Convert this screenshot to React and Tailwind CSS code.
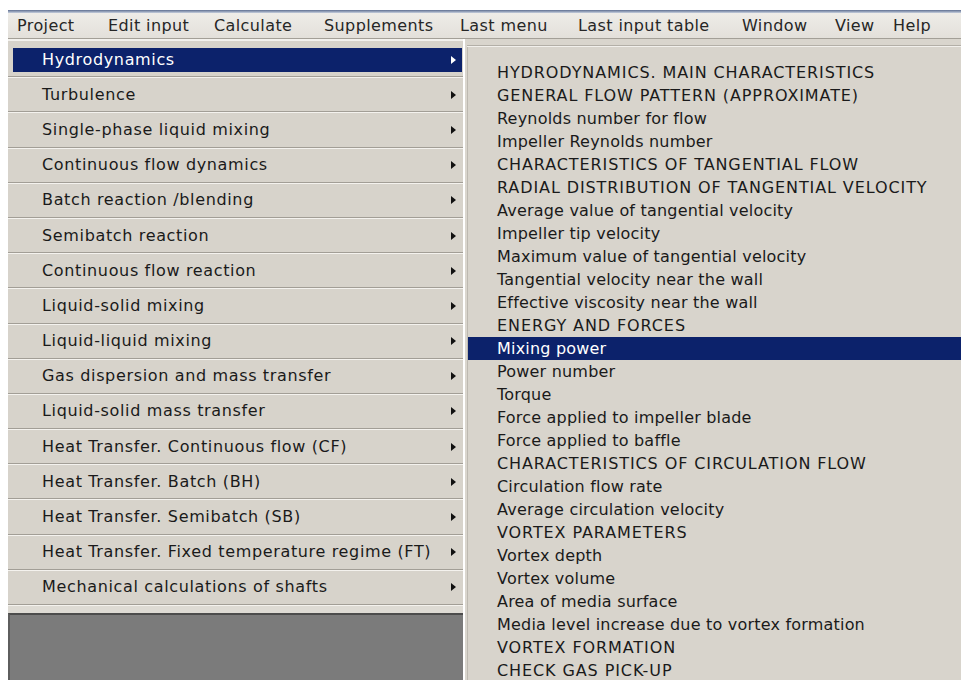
import React from "react";

const menuBar = [
  { label: "Project", w: "w-[91px]" },
  { label: "Edit input", w: "w-[106px]" },
  { label: "Calculate", w: "w-[110px]" },
  { label: "Supplements", w: "w-[136px]" },
  { label: "Last menu", w: "w-[118px]" },
  { label: "Last input table", w: "w-[164px]" },
  { label: "Window", w: "w-[93px]" },
  { label: "View", w: "w-[58px]" },
  { label: "Help", w: "w-[60px]" },
];

const sections = [
  "Hydrodynamics",
  "Turbulence",
  "Single-phase liquid mixing",
  "Continuous flow dynamics",
  "Batch reaction /blending",
  "Semibatch reaction",
  "Continuous flow reaction",
  "Liquid-solid mixing",
  "Liquid-liquid mixing",
  "Gas dispersion and mass transfer",
  "Liquid-solid mass transfer",
  "Heat Transfer. Continuous flow (CF)",
  "Heat Transfer. Batch (BH)",
  "Heat Transfer. Semibatch (SB)",
  "Heat Transfer. Fixed temperature regime (FT)",
  "Mechanical calculations of shafts",
];

// caps: section headings inside the submenu
const subItems = [
  { t: "HYDRODYNAMICS. MAIN CHARACTERISTICS", caps: true },
  { t: "GENERAL FLOW PATTERN (APPROXIMATE)", caps: true },
  { t: "Reynolds number for flow" },
  { t: "Impeller Reynolds number" },
  { t: "CHARACTERISTICS OF TANGENTIAL FLOW", caps: true },
  { t: "RADIAL DISTRIBUTION OF TANGENTIAL VELOCITY", caps: true },
  { t: "Average value of tangential velocity" },
  { t: "Impeller tip velocity" },
  { t: "Maximum value of tangential velocity" },
  { t: "Tangential velocity near the wall" },
  { t: "Effective viscosity near the wall" },
  { t: "ENERGY AND FORCES", caps: true },
  { t: "Mixing power", active: true },
  { t: "Power number" },
  { t: "Torque" },
  { t: "Force applied to impeller blade" },
  { t: "Force applied to baffle" },
  { t: "CHARACTERISTICS OF CIRCULATION FLOW", caps: true },
  { t: "Circulation flow rate" },
  { t: "Average circulation velocity" },
  { t: "VORTEX PARAMETERS", caps: true },
  { t: "Vortex depth" },
  { t: "Vortex volume" },
  { t: "Area of media surface" },
  { t: "Media level increase due to vortex formation" },
  { t: "VORTEX FORMATION", caps: true },
  { t: "CHECK GAS PICK-UP", caps: true },
];

function Arrow({ light }) {
  return (
    <svg width="5" height="8" viewBox="0 0 5 8" className="shrink-0">
      <polygon points="0,0 5,4 0,8" fill={light ? "#ffffff" : "#111111"} />
    </svg>
  );
}

function SectionRow({ label, active }) {
  return (
    <div className="h-[35.2px] flex flex-col shrink-0">
      <div className="flex-1 flex items-center pl-[5px] pr-[1px]">
        <div
          className={
            "h-[24px] w-full flex items-center justify-between pl-[29px] pr-[6px] " +
            (active ? "bg-[#0c226b] text-white" : "text-[#1a1a1a]")
          }
        >
          <span>{label}</span>
          <Arrow light={active} />
        </div>
      </div>
      <div className="h-px bg-[#a29e96]" />
      <div className="h-px bg-[#f4f2ee]" />
    </div>
  );
}

export default function App() {
  return (
    <div className="w-[961px] h-[680px] overflow-hidden bg-white font-['DejaVu_Sans',sans-serif] text-[16px] leading-none">
      <div className="h-[10px]" />
      <div className="ml-[8px] h-[670px] flex flex-col">
        {/* window menu bar */}
        <div className="h-[3px] bg-gradient-to-b from-[#5f6f91] to-[#c7cfdd]" />
        <div className="h-[25px] flex items-center pl-[9px] bg-gradient-to-b from-[#eeece8] to-[#e3e0da] text-[#262626] tracking-[0.4px]">
          {menuBar.map((m) => (
            <div key={m.label} className={m.w + " shrink-0 whitespace-nowrap"}>
              {m.label}
            </div>
          ))}
        </div>
        <div className="h-px bg-[#a39f97]" />

        <div className="flex-1 min-h-0 flex">
          {/* sections panel */}
          <div className="w-[455px] shrink-0 flex flex-col bg-[#d7d3cb] tracking-[0.65px]">
            <div className="h-[2px] bg-[#f3f1ed]" />
            <div className="h-[2px]" />
            {sections.map((s, i) => (
              <SectionRow key={s} label={s} active={i === 0} />
            ))}
            <div className="h-[7px] bg-[#dedbd4]" />
            <div className="flex-1 bg-[#7b7b7b] border-t-2 border-t-[#4c4c4c] border-l-2 border-l-[#5e5e5e]" />
          </div>
          <div className="w-[2px] bg-white" />
          <div className="w-[2px] bg-[#dad6ce]" />

          {/* submenu */}
          <div className="flex-1 min-w-0 flex flex-col bg-[#d9d5cd]">
            <div className="h-[7px] border-b border-[#b3afa7]" />
            <div className="h-px bg-[#f2f0ec]" />
            <div className="flex-1 min-h-0 border-l border-[#bdb9b1] bg-[#d8d4cc] pt-[14px] text-[#1a1a1a] tracking-[0.2px]">
              {subItems.map((it) => (
                <div
                  key={it.t}
                  className={
                    "h-[23px] flex items-center pl-[29px] whitespace-nowrap " +
                    (it.caps ? "tracking-[0.9px] " : "") +
                    (it.active ? "bg-[#0c226b] text-white" : "")
                  }
                >
                  {it.t}
                </div>
              ))}
            </div>
          </div>
        </div>
      </div>
    </div>
  );
}
